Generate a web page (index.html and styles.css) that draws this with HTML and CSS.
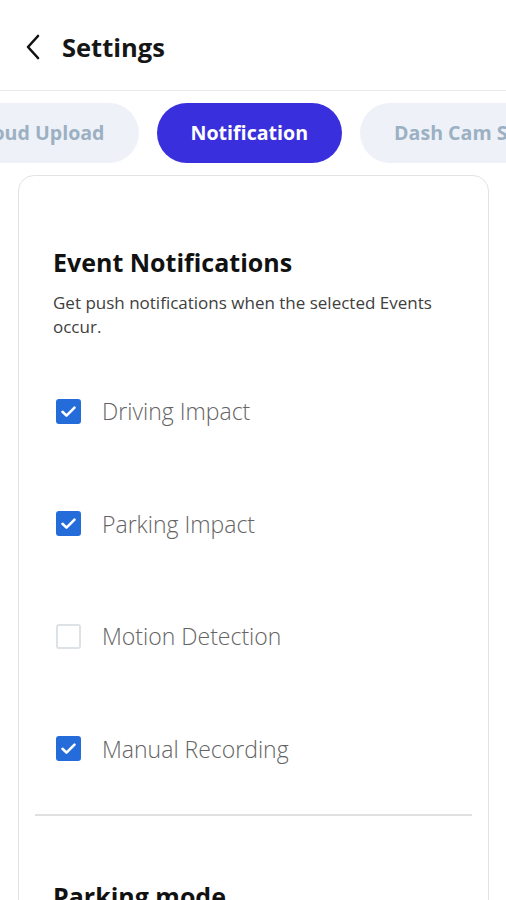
FILE: index.html
```html
<!DOCTYPE html>
<html>
<head>
	<title>Settings</title>
	<link rel="stylesheet" href="styles.css">
</head>
<body>
	<header class="topbar">
		<svg class="back" width="16" height="26" viewBox="0 0 16 26"><path d="M13 2 L3 13 L13 24" fill="none" stroke="#111" stroke-width="2.6" stroke-linecap="round" stroke-linejoin="round"/></svg>
		<h1>Settings</h1>
	</header>

	<nav class="tabs">
		<div class="tab-strip">
			<span class="tab">Cloud Upload</span>
			<span class="tab active">Notification</span>
			<span class="tab">Dash Cam Settings</span>
		</div>
	</nav>

	<section class="card">
		<div class="block">
			<h2>Event Notifications</h2>
			<p class="desc">Get push notifications when the selected Events occur.</p>

			<ul class="checks">
				<li><span class="box on"><svg width="25" height="25" viewBox="0 0 25 25"><path d="M6.5 12.8 L10.5 16.6 L18.5 8.6" fill="none" stroke="#fff" stroke-width="2.6" stroke-linecap="round" stroke-linejoin="round"/></svg></span>Driving Impact</li>
				<li><span class="box on"><svg width="25" height="25" viewBox="0 0 25 25"><path d="M6.5 12.8 L10.5 16.6 L18.5 8.6" fill="none" stroke="#fff" stroke-width="2.6" stroke-linecap="round" stroke-linejoin="round"/></svg></span>Parking Impact</li>
				<li><span class="box"></span>Motion Detection</li>
				<li><span class="box on"><svg width="25" height="25" viewBox="0 0 25 25"><path d="M6.5 12.8 L10.5 16.6 L18.5 8.6" fill="none" stroke="#fff" stroke-width="2.6" stroke-linecap="round" stroke-linejoin="round"/></svg></span>Manual Recording</li>
			</ul>
		</div>

		<hr class="rule">

		<div class="block">
			<h2 class="next">Parking mode</h2>
		</div>
	</section>
</body>
</html>
```

FILE: styles.css
```css
/* page */
body {
  margin: 0;
  background: #fff;
  font-family: "Open Sans", "Noto Sans", sans-serif;
  color: #111;
  width: 506px;
  height: 900px;
  overflow: hidden;
}

/* header */
.topbar {
  height: 91px;
  display: flex;
  align-items: center;
  padding: 3px 0 0 25px;
  border-bottom: 1.5px solid #e9e9e9;
  box-sizing: border-box;
}

.back {
  margin-right: 21px;
}

.topbar h1 {
  margin: 0;
  font-size: 25.5px;
  font-weight: 700;
  color: #161616;
}

/* tabs */
.tabs {
  overflow: hidden;
  padding-top: 12px;
}

.tab-strip {
  display: flex;
  gap: 18px;
  margin-left: -60px;
  white-space: nowrap;
}

.tab {
  height: 60px;
  line-height: 60px;
  padding: 0 34px;
  border-radius: 30px;
  background: #eef2f8;
  color: #9cb0c3;
  font-size: 19.6px;
  font-weight: 700;
}

.tab.active {
  background: #3a2fdc;
  color: #fff;
}

/* card */
.card {
  margin: 12px 17px 0 18px;
  border: 1.5px solid #e3e3e3;
  border-radius: 16px;
  padding: 0 16px;
  height: 760px;
}

.block {
  padding: 0 18px;
}

.block h2 {
  margin: 0;
  padding-top: 70px;
  font-size: 25px;
  line-height: 32px;
  font-weight: 700;
  color: #111;
}

.desc {
  margin: 13px 0 0;
  font-size: 17px;
  line-height: 24px;
  color: #404040;
}

.checks {
  list-style: none;
  margin: 52px 0 0;
  padding: 0;
  display: flex;
  flex-direction: column;
  gap: 72.5px;
}

.checks li {
  display: flex;
  align-items: center;
  height: 40px;
  font-size: 23px;
  font-weight: 300;
  color: #646464;
}

.box {
  width: 25px;
  height: 25px;
  box-sizing: border-box;
  border: 2px solid #dde2e7;
  border-radius: 3px;
  margin: 0 21px 0 3px;
  display: flex;
}

.box.on {
  background: #246cd9;
  border-color: #246cd9;
}

.box svg {
  margin: -2px;
}

.rule {
  border: none;
  border-top: 2px solid #e0e0e0;
  margin: 45px 0 0;
}

.block h2.next {
  padding-top: 64px;
}
```
